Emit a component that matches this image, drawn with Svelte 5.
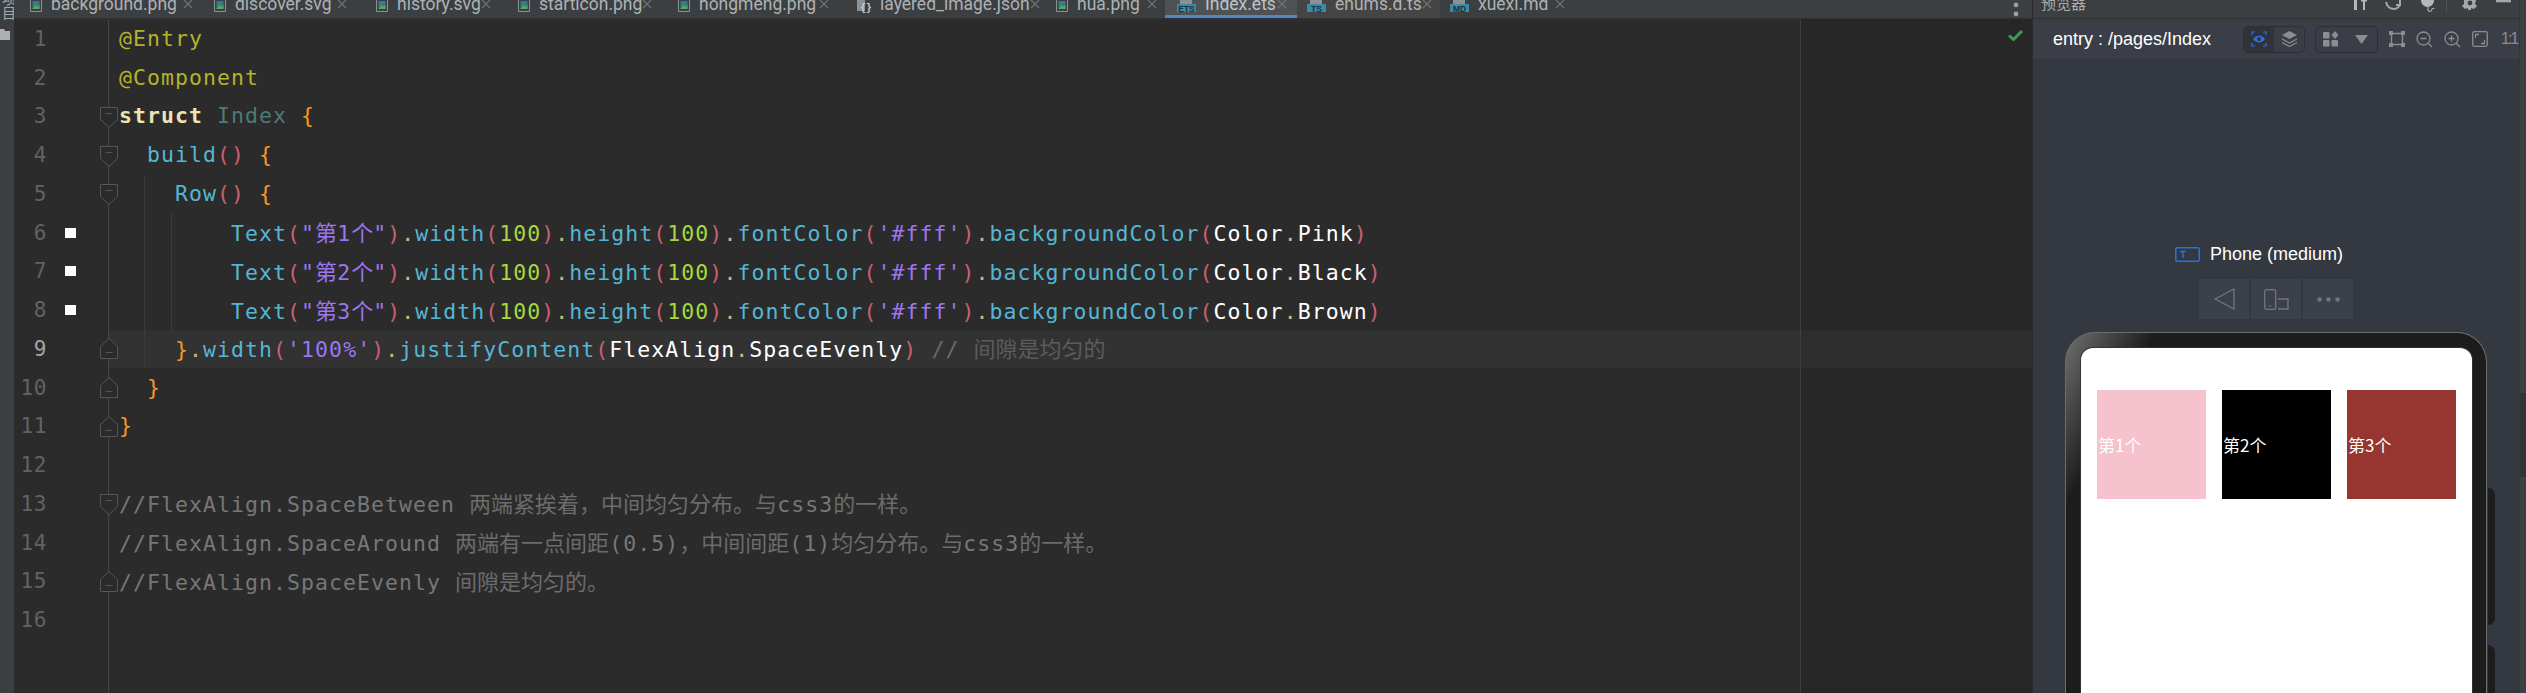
<script>
  const tabs = [
    { name: 'background.png', icon: 'img', width: 184, inset: 13, right: 8 },
    { name: 'discover.svg', icon: 'img', width: 162, inset: 13, right: 16 },
    { name: 'history.svg', icon: 'img', width: 142, inset: 13, right: 14 },
    { name: 'starticon.png', icon: 'img', width: 160, inset: 13, right: 13 },
    { name: 'hongmeng.png', icon: 'img', width: 178, inset: 13, right: 14 },
    { name: 'layered_image.json', icon: 'json', width: 200, inset: 13, right: 10 },
    { name: 'hua.png', icon: 'img', width: 122, inset: 13, right: 8 },
    { name: 'Index.ets', icon: 'ETS', width: 132, inset: 12, right: 10, active: true },
    { name: 'enums.d.ts', icon: 'TS', width: 143, inset: 10, right: 9, warm: true },
    { name: 'xuexi.md', icon: 'MD', width: 150, inset: 10, right: 25 }
  ];

  const call = (name, arg, kind) => [['fn', name], ['par', '('], [kind, arg], ['par', ')']];
  const text = (n, color) => [
    ['', '        '],
    ...call('Text', `"第${n}个"`, 'str'),
    ['dot', '.'], ...call('width', '100', 'lit'),
    ['dot', '.'], ...call('height', '100', 'lit'),
    ['dot', '.'], ...call('fontColor', "'#fff'", 'str'),
    ['dot', '.'], ['fn', 'backgroundColor'], ['par', '('], ['prop', 'Color'], ['dot', '.'], ['prop', color], ['par', ')']
  ];

  const lines = [
    { code: [['ann', '@Entry']] },
    { code: [['ann', '@Component']] },
    { fold: 'down', code: [['kw', 'struct'], ['', ' '], ['cls', 'Index'], ['', ' '], ['br', '{']] },
    { fold: 'down', code: [['', '  '], ['fn', 'build'], ['par', '()'], ['', ' '], ['br', '{']] },
    { fold: 'down', code: [['', '    '], ['fn', 'Row'], ['par', '()'], ['', ' '], ['br', '{']], guides: [144] },
    { mark: true, code: text(1, 'Pink'), guides: [144, 171] },
    { mark: true, code: text(2, 'Black'), guides: [144, 171] },
    { mark: true, code: text(3, 'Brown'), guides: [144, 171] },
    {
      fold: 'up', active: true, guides: [144],
      code: [
        ['', '    '], ['br', '}'], ['dot', '.'], ...call('width', "'100%'", 'str'),
        ['dot', '.'], ['fn', 'justifyContent'], ['par', '('], ['prop', 'FlexAlign'], ['dot', '.'], ['prop', 'SpaceEvenly'], ['par', ')'],
        ['', ' '], ['com dim', '// 间隙是均匀的']
      ]
    },
    { fold: 'up', code: [['', '  '], ['br', '}']] },
    { fold: 'up', code: [['br', '}']] },
    { code: [] },
    { fold: 'down', code: [['com', '//FlexAlign.SpaceBetween 两端紧挨着，中间均匀分布。与css3的一样。']] },
    { code: [['com', '//FlexAlign.SpaceAround 两端有一点间距(0.5)，中间间距(1)均匀分布。与css3的一样。']] },
    { fold: 'up', code: [['com', '//FlexAlign.SpaceEvenly 间隙是均匀的。']] },
    { code: [] }
  ];

  // CJK glyphs are wider than the mono cell, so they get their own run
  function runs(str) {
    return str.split(/([\u3000-\u9fff\uff00-\uffef]+)/).filter(Boolean).map((t) => ({
      t,
      cjk: /[\u3000-\u9fff\uff00-\uffef]/.test(t)
    }));
  }

  const boxes = [
    { label: '第1个', color: '#f5c2cd' },
    { label: '第2个', color: '#000000' },
    { label: '第3个', color: '#973530' }
  ];
</script>

<div class="ide">
  <aside class="rail">
    <span class="rail-title">项目</span>
    <svg class="rail-folder" width="10" height="11" viewBox="0 0 10 11"><path d="M0 0H4L5 2H10V11H0Z" fill="#adb0b2"/></svg>
  </aside>

  <section class="center">
    <div class="tabs">
      {#each tabs as tab}
        <div class="tab" class:active={tab.active} class:warm={tab.warm} style="width:{tab.width}px;padding-left:{tab.inset}px;padding-right:{tab.right}px">
          {#if tab.icon === 'img'}
            <svg class="file" width="12" height="12" viewBox="0 0 12 12">
              <path d="M.5-4H11.5V11.5H.5Z" fill="#3c3f41" stroke="#8d9194"/>
              <path d="M2.5 1H9.5V9H2.5Z" fill="#2f7f8f"/>
              <path d="M2.5 9L5.5 5L7.5 7L9.5 5V9Z" fill="#5ea35c"/>
            </svg>
          {:else if tab.icon === 'json'}
            <svg class="file" width="15" height="13" viewBox="0 0 15 13">
              <path d="M1-4H9V11H1Z" fill="#8d9194"/>
              <text x="4" y="11" class="json-glyph">{'{}'}</text>
            </svg>
          {:else}
            <svg class="file" width="19" height="13" viewBox="0 0 19 13">
              <path d="M3-4H15V4H3Z" fill="#8d9194"/>
              <rect x="0" y="4" width="19" height="8" fill="#3d8aa8"/>
              <text x="9.5" y="11.5" class="file-tag">{tab.icon}</text>
            </svg>
          {/if}
          <span class="tab-name">{tab.name}</span>
          <svg class="close" width="10" height="9" viewBox="0 0 10 9"><path d="M1 0L9 8M9 0L1 8" stroke="#6f7376" stroke-width="1.2"/></svg>
        </div>
      {/each}
      <svg class="tabs-more" width="6" height="18" viewBox="0 0 6 18"><circle cx="3" cy="5" r="2.4" fill="#9a9d9f"/><circle cx="3" cy="14" r="2.4" fill="#9a9d9f"/></svg>
    </div>

    <div class="editor">
      {#each lines as line, i}
        <div class="line">
          <div class="gutter">
            <span class="num" class:current={line.active}>{i + 1}</span>
            <span class="mark" class:on={line.mark}></span>
            {#if line.fold === 'down'}
              <svg class="fold down" width="18" height="21" viewBox="0 0 18 21">
                <path d="M.5.5H17.5V12.5L9 20.5L.5 12.5Z" fill="#2b2b2b" stroke="#555"/><path d="M5.5 6.5H12.5" stroke="#555"/>
              </svg>
            {:else if line.fold === 'up'}
              <svg class="fold up" width="18" height="21" viewBox="0 0 18 21">
                <path d="M.5 20.5H17.5V8.5L9 .5L.5 8.5Z" fill="#2b2b2b" stroke="#555"/><path d="M5.5 14.5H12.5" stroke="#555"/>
              </svg>
            {/if}
          </div>
          <div class="code" class:active={line.active}>
            {#each line.guides ?? [] as x}
              <i class="guide" style="left:{x - 109}px"></i>
            {/each}
            <pre>{#each line.code as [kind, str]}<span class={kind}>{#each runs(str) as r}{#if r.cjk}<span class="cjk">{r.t}</span>{:else}{r.t}{/if}{/each}</span>{/each}</pre>
          </div>
        </div>
      {/each}
      <div class="line rest"><div class="gutter"></div></div>
      <div class="margin"></div>
      <svg class="check" width="15" height="11" viewBox="0 0 15 11"><path d="M1 5.5L5.5 9.5L14 1" fill="none" stroke="#3f9a4f" stroke-width="3"/></svg>
    </div>
  </section>

  <section class="panel">
    <div class="panel-main">
      <header class="panel-head">
        <span class="panel-title">预览器</span>
        <div class="head-icons">
          <svg width="16" height="10" viewBox="0 0 16 10"><path d="M2 0H5V10H2ZM9 0H15V1.5H13V10H11V1.5H9Z" fill="#b5b7b9"/></svg>
          <svg width="17" height="10" viewBox="0 0 17 10"><path d="M1 2C2 7 6 9 9 9C12 9 14 7 15 4M15 0V5H11" fill="none" stroke="#a5a8aa" stroke-width="2"/></svg>
          <svg width="18" height="12" viewBox="0 0 18 12"><path d="M2 0H15C15 4 12 7 8.500 7C5 7 2 4 2 0Z" fill="#b5b7b9"/><path d="M9 7V10C9 12 13 12 13 9C13 8 15 8 15 9" fill="none" stroke="#a5a8aa" stroke-width="1.2"/></svg>
          <i class="head-sep"></i>
          <svg width="18" height="10" viewBox="0 0 18 10"><path d="M3 0H15L14 4L16 6L13 9L10 8V10H7V8L4 9L1 6L3 4Z" fill="#a5a8aa"/><circle cx="9" cy="3" r="2.400" fill="#3c3f41"/></svg>
          <svg width="15" height="4" viewBox="0 0 15 4"><path d="M0 1H15" stroke="#a5a8aa" stroke-width="2.600"/></svg>
        </div>
      </header>

      <div class="panel-tools">
        <span class="route">entry : /pages/Index</span>
        <div class="toggle">
          <span class="cell on">
            <svg width="16" height="16" viewBox="0 0 16 16">
              <path d="M1 4V1H4M12 1H15V4M15 12V15H12M4 15H1V12" fill="none" stroke="#2f6fde" stroke-width="1.200"/>
              <path d="M2 8C5 3.500 11 3.500 14 8C11 12.500 5 12.500 2 8Z" fill="#2f6fde"/><circle cx="8" cy="8" r="2" fill="#30333a"/>
            </svg>
          </span>
          <span class="cell">
            <svg width="17" height="16" viewBox="0 0 17 16">
              <path d="M8.500 0L16 4L8.500 8L1 4Z" fill="#8b8d90"/>
              <path d="M1 8L8.500 12L16 8M1 11.500L8.500 15.500L16 11.500" fill="none" stroke="#8b8d90" stroke-width="1.200"/>
            </svg>
          </span>
        </div>
        <div class="toggle wide">
          <svg width="16" height="16" viewBox="0 0 16 16">
            <rect x="0" y="1" width="6.500" height="6.500" rx="1" fill="#8b8d90"/><rect x="0" y="9" width="6.500" height="6.500" rx="1" fill="#8b8d90"/><rect x="8.500" y="9" width="6.500" height="6.500" rx="1" fill="#8b8d90"/><path d="M12 0L15.500 4L12 8L8.500 4Z" fill="#8b8d90"/>
          </svg>
          <svg width="13" height="9" viewBox="0 0 13 9"><path d="M0 0H13L6.500 9Z" fill="#8b8d90"/></svg>
        </div>
        <div class="tool-icons">
          <svg width="16" height="16" viewBox="0 0 16 16"><path d="M2.500 2.500H13.500V13.500H2.500Z" fill="none" stroke="#8b8d90" stroke-width="1.400"/><path d="M0 0H4V4H0ZM12 0H16V4H12ZM0 12H4V16H0ZM12 12H16V16H12Z" fill="#8b8d90"/></svg>
          <svg width="17" height="17" viewBox="0 0 17 17"><circle cx="7.500" cy="7.500" r="6.500" fill="none" stroke="#8b8d90" stroke-width="1.300"/><path d="M4.500 7.500H10.500M12 12L16 16" stroke="#8b8d90" stroke-width="1.300"/></svg>
          <svg width="17" height="17" viewBox="0 0 17 17"><circle cx="7.500" cy="7.500" r="6.500" fill="none" stroke="#8b8d90" stroke-width="1.300"/><path d="M4.500 7.500H10.500M7.500 4.500V10.500M12 12L16 16" stroke="#8b8d90" stroke-width="1.300"/></svg>
          <svg width="16" height="16" viewBox="0 0 16 16"><rect x=".7" y=".7" width="14.600" height="14.600" rx="1.500" fill="none" stroke="#8b8d90" stroke-width="1.300"/><path d="M3.500 7V3.500H7M12.500 9V12.500H9" fill="none" stroke="#8b8d90" stroke-width="1.300"/></svg>
          <span class="ratio">1:1</span>
        </div>
      </div>

      <div class="stage">
        <div class="device">
          <svg width="25" height="15" viewBox="0 0 25 15"><rect x=".75" y=".75" width="23.500" height="13.500" rx="1.500" fill="none" stroke="#2b6fe0" stroke-width="1.500"/><path d="M5 4.500H11M8 4.500V11" fill="none" stroke="#2b6fe0" stroke-width="1.500"/></svg>
          <span>Phone (medium)</span>
        </div>
        <div class="controls">
          <span class="ctl"><svg width="21" height="22" viewBox="0 0 21 22"><path d="M20 1V21L1 11Z" fill="none" stroke="#73767c" stroke-width="1.300" stroke-linejoin="round"/></svg></span>
          <span class="ctl"><svg width="25" height="21" viewBox="0 0 25 21"><rect x=".7" y=".7" width="11" height="19.600" rx="2" fill="none" stroke="#73767c" stroke-width="1.300"/><path d="M5 17H7.500" stroke="#73767c"/><path d="M14 10H24V20H14" fill="none" stroke="#73767c" stroke-width="1.300"/></svg></span>
          <span class="ctl"><svg width="23" height="5" viewBox="0 0 23 5"><circle cx="2.500" cy="2.500" r="2.200" fill="#73767c"/><circle cx="11.500" cy="2.500" r="2.200" fill="#73767c"/><circle cx="20.500" cy="2.500" r="2.200" fill="#73767c"/></svg></span>
        </div>
        <div class="phone">
          <i class="side one"></i>
          <i class="side two"></i>
          <div class="screen">
            {#each boxes as box}
              <div class="box" style="background:{box.color}">{box.label}</div>
            {/each}
          </div>
        </div>
      </div>
    </div>
    <div class="strip"><i></i></div>
  </section>
</div>

<style>
  :global(body) {
    margin: 0;
    background: #2b2b2b;
  }

  .ide {
    display: flex;
    width: 2526px;
    height: 693px;
    overflow: hidden;
  }

  .rail {
    width: 14px;
    flex: none;
    background: #3c3f41;
    overflow: hidden;
    display: flex;
    flex-direction: column;
  }

  .rail-title {
    height: 28px;
    margin-top: -8px;
    writing-mode: vertical-rl;
    font: 14px/11px 'Noto Sans CJK SC', sans-serif;
    color: #a8abad;
  }

  .rail-folder {
    margin-top: 9px;
  }

  .center {
    flex: 1;
    min-width: 0;
    display: flex;
    flex-direction: column;
  }

  .tabs {
    height: 18px;
    flex: none;
    display: flex;
    padding-left: 3px;
    background: #3c3f41;
    border-bottom: 1px solid #323232;
    position: relative;
  }

  .tab {
    height: 18px;
    box-sizing: border-box;
    flex: none;
    display: flex;
    align-items: flex-start;
    overflow: hidden;
    font: 17.5px/18px Roboto, sans-serif;
    color: #aeb2b5;
  }

  .tab.active {
    background: #4e5254;
    border-bottom: 3px solid #4a88c7;
    color: #bfc3c6;
  }

  .tab.warm {
    background: #454545;
  }

  .file {
    flex: none;
  }

  .file-tag {
    font: 700 8.5px 'Liberation Sans', sans-serif;
    text-anchor: middle;
    fill: #16323f;
  }

  .json-glyph {
    font: 700 10px 'DejaVu Sans Mono', monospace;
    fill: #c9ccce;
  }

  .tab-name {
    margin-left: 9px;
    margin-top: -5px;
    white-space: nowrap;
  }

  .close {
    margin-left: auto;
    flex: none;
  }

  .tabs-more {
    margin-left: auto;
    margin-right: 13px;
  }

  .editor {
    flex: 1;
    position: relative;
    background: #2b2b2b;
    padding-top: 0.5px;
    overflow: hidden;
    display: flex;
    flex-direction: column;
  }

  .line {
    display: flex;
    height: 38.75px;
    flex: none;
  }

  .line.rest {
    flex: 1;
    height: auto;
  }

  .gutter {
    width: 94px;
    flex: none;
    display: flex;
    align-items: center;
    border-right: 1px solid #464646;
    box-sizing: content-box;
  }

  .num {
    width: 33px;
    flex: none;
    text-align: right;
    font: 21px 'DejaVu Sans Mono', monospace;
    letter-spacing: 0.6px;
    color: #606366;
  }

  .num.current {
    color: #a4a3a3;
  }

  .mark {
    width: 11px;
    height: 10px;
    margin-left: 18px;
    flex: none;
  }

  .mark.on {
    background: #ffffff;
  }

  .fold {
    margin-left: 24px;
    flex: none;
    position: relative;
    z-index: 1;
  }

  .fold.down {
    margin-top: 2px;
  }

  .code {
    flex: 1;
    position: relative;
    padding-left: 10px;
    display: flex;
    align-items: center;
  }

  .code.active {
    background: #323232;
  }

  .guide {
    position: absolute;
    top: 0;
    bottom: 0;
    width: 1px;
    background: #3b3b3b;
  }

  pre {
    margin: 0;
    position: relative;
    font: 21.5px/38px 'DejaVu Sans Mono', monospace;
    letter-spacing: 1.06px;
    color: #a9b7c6;
  }

  .cjk {
    font-family: 'Noto Sans CJK SC', sans-serif;
    font-size: 22px;
    letter-spacing: 0;
  }

  .ann {
    color: #b5b22c;
  }

  .kw {
    color: #ece3b0;
    font-weight: 700;
  }

  .cls {
    color: #4f7a76;
  }

  .br {
    color: #f59a23;
  }

  .fn {
    color: #56b6d2;
  }

  .par {
    color: #c9606f;
  }

  .str {
    color: #9b76f0;
  }

  .lit {
    color: #a8d83e;
  }

  .dot {
    color: #c8bc7a;
  }

  .prop {
    color: #ffffff;
  }

  .com {
    color: #777777;
  }

  .com .cjk {
    color: #6c6c6c;
  }

  .com.dim {
    color: #6a6a6a;
  }

  .com.dim .cjk {
    color: #5c5c5c;
  }

  .margin {
    position: absolute;
    top: 0;
    bottom: 0;
    left: 1786px;
    right: 0;
    border-left: 1px solid #3f3f3f;
    background: rgba(0, 0, 0, 0.07);
  }

  .check {
    position: absolute;
    top: 11px;
    right: 9px;
  }

  .panel {
    width: 494px;
    flex: none;
    display: flex;
    box-sizing: border-box;
    border-left: 1px solid #2b2b2b;
  }

  .panel-main {
    flex: 1;
    min-width: 0;
    display: flex;
    flex-direction: column;
    background: #343840;
  }

  .panel-head {
    height: 18px;
    flex: none;
    display: flex;
    justify-content: space-between;
    background: #3c3f41;
    border-bottom: 1px solid #2f3032;
    overflow: hidden;
  }

  .panel-title {
    margin-left: 8px;
    margin-top: -8px;
    font: 15px/22px 'Noto Sans CJK SC', sans-serif;
    color: #a9abad;
  }

  .head-icons {
    display: flex;
    align-items: flex-start;
    gap: 17px;
    padding-right: 8px;
  }

  .head-sep {
    width: 1px;
    height: 13px;
    background: #4e5254;
    margin: 0 -3px 0 -8px;
  }

  .panel-tools {
    height: 40px;
    flex: none;
    display: flex;
    align-items: center;
    background: #3b3e47;
    padding-left: 20px;
  }

  .route {
    width: 190px;
    flex: none;
    font: 18px 'Liberation Sans', sans-serif;
    color: #ffffff;
    white-space: nowrap;
  }

  .toggle {
    width: 62px;
    height: 27px;
    flex: none;
    box-sizing: border-box;
    display: flex;
    border: 1px solid #2d2f35;
    border-radius: 5px;
    overflow: hidden;
  }

  .cell {
    flex: 1;
    display: flex;
    align-items: center;
    justify-content: center;
  }

  .cell.on {
    background: #30333a;
  }

  .toggle.wide {
    width: 63px;
    margin-left: 10px;
    align-items: center;
    justify-content: space-between;
    padding: 0 9px 0 7px;
  }

  .tool-icons {
    display: flex;
    align-items: center;
    gap: 11px;
    margin-left: 11px;
    flex: none;
  }

  .tool-icons svg {
    flex: none;
  }

  .ratio {
    margin-left: 2px;
    font: 16px 'Liberation Sans', sans-serif;
    letter-spacing: -2px;
    color: #8b8d90;
  }

  .stage {
    flex: 1;
    min-height: 0;
    display: flex;
    flex-direction: column;
    align-items: center;
    overflow: hidden;
    padding-top: 180px;
    box-sizing: border-box;
  }

  .device {
    height: 30px;
    flex: none;
    display: flex;
    align-items: center;
    gap: 10px;
    padding-right: 34px;
    font: 18px 'Liberation Sans', sans-serif;
    color: #ffffff;
  }

  .controls {
    display: flex;
    gap: 2px;
    margin-top: 10px;
    flex: none;
  }

  .ctl {
    width: 50px;
    height: 40px;
    display: flex;
    align-items: center;
    justify-content: center;
    background: #3c404a;
  }

  .phone {
    position: relative;
    width: 422px;
    height: 500px;
    flex: none;
    margin-top: 13px;
    box-sizing: border-box;
    padding: 15px 14px 0 15px;
    border: 1px solid #6d6d6d;
    border-bottom: 0;
    border-radius: 30px 30px 0 0;
    background: linear-gradient(117deg, #707070 0, #1c1c1c 80px);
  }

  .side {
    position: absolute;
    left: 422px;
    width: 7px;
    background: #1c1c1c;
    border-radius: 0 7px 7px 0;
  }

  .side.one {
    top: 155px;
    height: 137px;
  }

  .side.two {
    top: 312px;
    height: 137px;
  }

  .screen {
    height: 100%;
    box-sizing: border-box;
    display: flex;
    justify-content: space-evenly;
    align-items: flex-start;
    padding-top: 42px;
    background: #ffffff;
    border-radius: 12px 12px 0 0;
    box-shadow: 0 0 0 1px #333333;
  }

  .box {
    width: 109px;
    height: 109px;
    display: flex;
    align-items: center;
    padding-left: 1px;
    box-sizing: border-box;
    font: 17px 'Noto Sans CJK SC', sans-serif;
    color: #ffffff;
  }

  .strip {
    width: 7px;
    flex: none;
    box-sizing: border-box;
    background: #3c3f41;
    border-left: 1px solid #34363a;
    padding-top: 393px;
  }

  .strip i {
    display: block;
    height: 84px;
    background: #313335;
  }
</style>
